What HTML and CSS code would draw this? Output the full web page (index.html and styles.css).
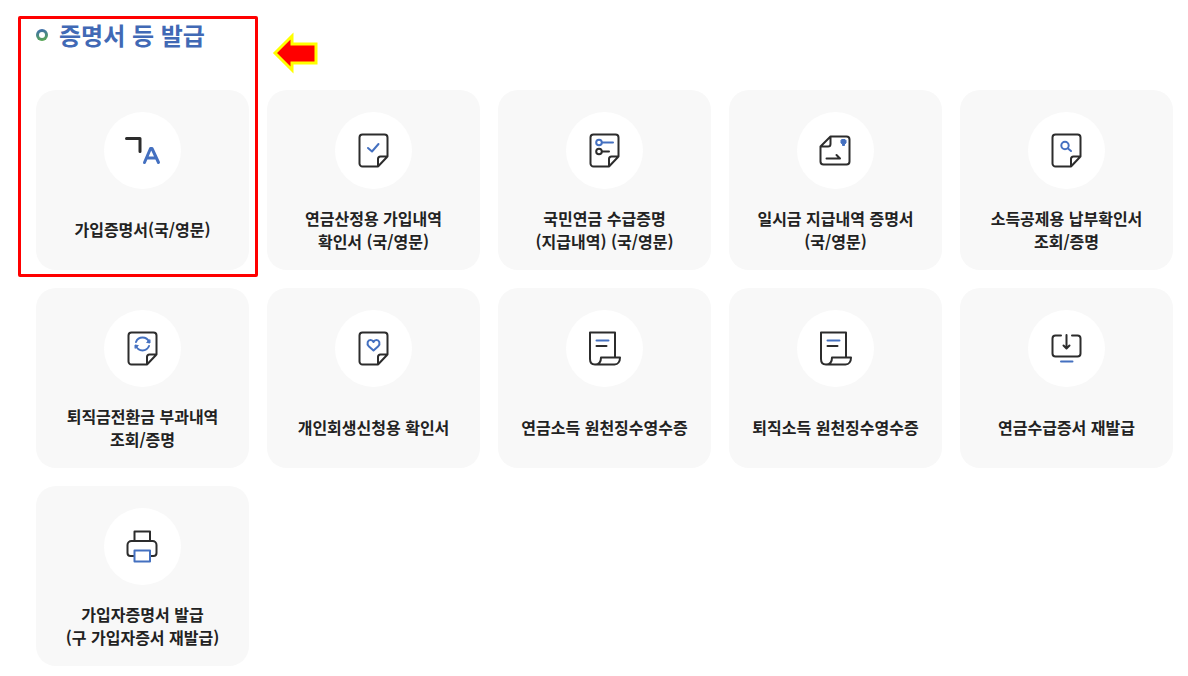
FILE: index.html
```
<!DOCTYPE html>
<html lang="ko">
<head>
  <meta charset="UTF-8" />
  <meta name="viewport" content="width=device-width, initial-scale=1.0"/>
  <title>증명서 등 발급</title>
  <link rel="stylesheet" href="styles.css">
</head>
<body>
  <!-- shared icon shapes -->
  <svg class="defs" width="0" height="0" aria-hidden="true">
    <defs>
      <symbol id="note" viewBox="0 0 77 77">
        <path d="M43 54.500H27.500a3 3 0 0 1-3-3V25.500a3 3 0 0 1 3-3H49.500a3 3 0 0 1 3 3V44.500L43 54.500V47a2.500 2.500 0 0 1 2.500-2.500H52.500"/>
      </symbol>
      <symbol id="receipt" viewBox="0 0 77 77">
        <path d="M49 47.500V22.500H24V49c0 3.500 2 5.500 5 5.500H48.500c3.500 0 5.500-3 5.500-7H35c0 4-2 7-6 7"/>
        <path class="blue" d="M30.500 30.500H42.500"/>
        <path d="M30.500 36H40.500"/>
      </symbol>
    </defs>
  </svg>

  <main class="container">
    <h2 class="title"><span class="bullet"></span>증명서 등 발급</h2>

    <div class="cards">
      <a href="#" class="card">
        <span class="icon">
          <svg viewBox="0 0 77 77">
            <path class="thick" d="M22.500 26.500H36V39.500"/>
            <path class="thick blue" d="M40.500 50.500L46.500 36.500H48L54.500 50.500M42.500 46H52.500"/>
          </svg>
        </span>
        <span class="label">가입증명서(국/영문)</span>
      </a>
      <a href="#" class="card">
        <span class="icon">
          <svg viewBox="0 0 77 77"><use href="#note"/><path class="blue" d="M33 36L37 39.500L43.500 32"/></svg>
        </span>
        <span class="label">연금산정용 가입내역<br>확인서 (국/영문)</span>
      </a>
      <a href="#" class="card">
        <span class="icon">
          <svg viewBox="0 0 77 77">
            <use href="#note"/>
            <circle class="blue" cx="33" cy="30.500" r="2.800"/>
            <path class="blue" d="M36 30.500H47"/>
            <circle cx="33" cy="39.500" r="2.800"/>
            <path d="M36 39.500H43"/>
          </svg>
        </span>
        <span class="label">국민연금 수급증명<br>(지급내역) (국/영문)</span>
      </a>
      <a href="#" class="card">
        <span class="icon">
          <svg viewBox="0 0 77 77">
            <path d="M33.500 24.500H49.500a3 3 0 0 1 3 3V49.500a3 3 0 0 1-3 3H26.500a3 3 0 0 1-3-3V34.500L33.500 24.500V32a2.500 2.500 0 0 1-2.500 2.500H23.500"/>
            <path d="M29.500 46.500H43L39.500 43"/>
            <path class="fill" d="M45 27.500H48L49 28.500V31L47.500 32V33.500H45.500V32L44 31V28.500Z"/>
          </svg>
        </span>
        <span class="label">일시금 지급내역 증명서<br>(국/영문)</span>
      </a>
      <a href="#" class="card">
        <span class="icon">
          <svg viewBox="0 0 77 77"><use href="#note"/><circle class="blue" cx="37" cy="33.500" r="3.700"/><path class="blue" d="M40 36.500L43 39"/></svg>
        </span>
        <span class="label">소득공제용 납부확인서<br>조회/증명</span>
      </a>

      <a href="#" class="card">
        <span class="icon">
          <svg viewBox="0 0 77 77">
            <use href="#note"/>
            <path class="blue" d="M32 32A7 7 0 0 1 45 32M45 36A7 7 0 0 1 32 36"/>
            <path class="fill" d="M46 30L46 33L43 32.500ZM31 38L31 35L34 35.500Z"/>
          </svg>
        </span>
        <span class="label">퇴직금전환금 부과내역<br>조회/증명</span>
      </a>
      <a href="#" class="card">
        <span class="icon">
          <svg viewBox="0 0 77 77"><use href="#note"/><path class="blue" d="M38.500 40.500L34 36.500C31 33.500 33 30 35.500 30C37 30 38 31 38.500 32C39 31 40 30 41.500 30C44 30 46 33.500 43 36.500Z"/></svg>
        </span>
        <span class="label">개인회생신청용 확인서</span>
      </a>
      <a href="#" class="card">
        <span class="icon"><svg viewBox="0 0 77 77"><use href="#receipt"/></svg></span>
        <span class="label">연금소득 원천징수영수증</span>
      </a>
      <a href="#" class="card">
        <span class="icon"><svg viewBox="0 0 77 77"><use href="#receipt"/></svg></span>
        <span class="label">퇴직소득 원천징수영수증</span>
      </a>
      <a href="#" class="card">
        <span class="icon">
          <svg viewBox="0 0 77 77">
            <path d="M33 25.500H27.500a3 3 0 0 0-3 3V43.500a3 3 0 0 0 3 3H49.500a3 3 0 0 0 3-3V28.500a3 3 0 0 0-3-3H44"/>
            <path d="M38.500 25V38M35.500 35.500L38.500 38.500L41.500 35.500"/>
            <path class="blue" d="M33 51.500H44.500"/>
          </svg>
        </span>
        <span class="label">연금수급증서 재발급</span>
      </a>

      <a href="#" class="card">
        <span class="icon">
          <svg viewBox="0 0 77 77">
            <path d="M30.500 33V23.500H46V33"/>
            <path d="M29.500 48H26.500a3 3 0 0 1-3-3V37a4 4 0 0 1 4-4H48.500a4 4 0 0 1 4 4V45a3 3 0 0 1-3 3H46.500"/>
            <path class="blue" d="M30.500 42.500H46V53.500H30.500Z"/>
          </svg>
        </span>
        <span class="label">가입자증명서 발급<br>(구 가입자증서 재발급)</span>
      </a>
    </div>

    <!-- highlight over the first card -->
    <div class="highlight"></div>
    <svg class="arrow" viewBox="0 0 46 42" aria-hidden="true">
      <path d="M3 21L20 4V12H44V31H20V38Z"/>
    </svg>
  </main>
</body>
</html>
```
FILE: styles.css
```
:root {
  --blue: #4169b5;
  --card: #f8f8f8;
  --text: #222222;
}

* {
  box-sizing: border-box;
}

body {
  font-family: 'Noto Sans CJK KR', 'Noto Sans', sans-serif;
  background: #fff;
  color: var(--text);
  margin: 0;
}

.defs {
  position: absolute;
}

.container {
  position: relative;
  padding: 18px 15px 10px 36px;
}

.title {
  display: flex;
  align-items: center;
  gap: 11px;
  margin: 0 0 38px;
  color: var(--blue);
  font-size: 24px;
  font-weight: 700;
  line-height: 34px;
}

.bullet {
  width: 12px;
  height: 12px;
  border: 3px solid transparent;
  border-radius: 50%;
  background: linear-gradient(#fff, #fff) padding-box,
    linear-gradient(170deg, #3b68b4, #5cae4c) border-box;
}

.cards {
  display: grid;
  grid-template-columns: repeat(5, 1fr);
  gap: 18px;
}

.card {
  display: flex;
  flex-direction: column;
  align-items: center;
  min-height: 180px;
  padding: 22px 8px 17px;
  border-radius: 20px;
  background: var(--card);
  color: var(--text);
  text-decoration: none;
}

.icon {
  width: 77px;
  height: 77px;
  margin-bottom: 17px;
  border-radius: 50%;
  background: #fff;
}

.icon svg {
  display: block;
  width: 100%;
  height: 100%;
}

svg path,
svg circle {
  fill: none;
  stroke: #2c2c2c;
  stroke-width: 2;
  stroke-linejoin: round;
  stroke-linecap: round;
}

svg .thick {
  stroke-width: 3;
}

svg .blue {
  stroke: #4470c0;
}

svg .fill {
  fill: #4470c0;
  stroke: #4470c0;
  stroke-width: 1;
}

.label {
  display: flex;
  flex: 1;
  flex-direction: column;
  justify-content: center;
  font-size: 16px;
  font-weight: 700;
  line-height: 23px;
  text-align: center;
}

.highlight {
  position: absolute;
  top: 16px;
  left: 18px;
  width: 240px;
  height: 261px;
  border: 3px solid #ff0000;
  border-radius: 2px;
  pointer-events: none;
}

.arrow {
  position: absolute;
  top: 32px;
  left: 272px;
  width: 46px;
  height: 42px;
}

.arrow path {
  fill: #ff0000;
  stroke: #ffff00;
  stroke-width: 3;
  stroke-linejoin: miter;
}
```
